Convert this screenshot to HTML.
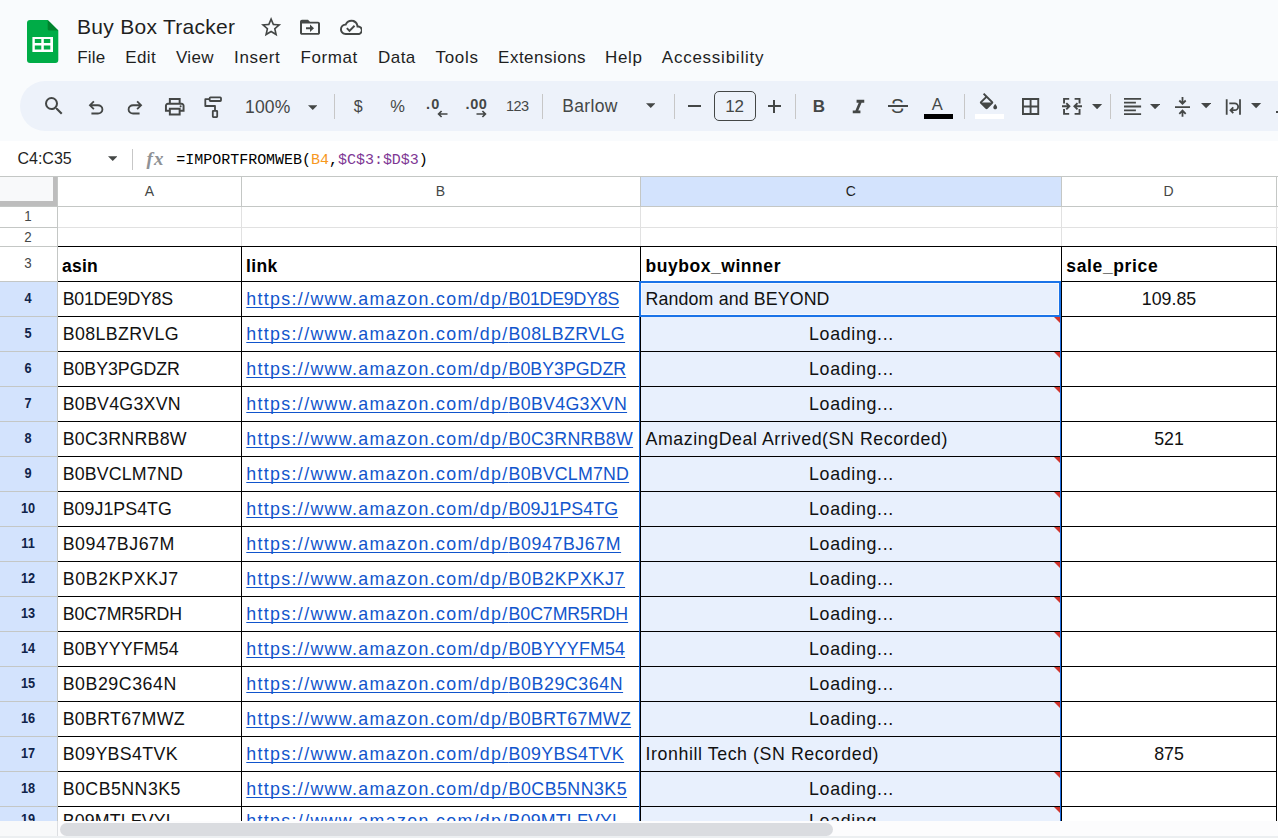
<!DOCTYPE html>
<html lang="en"><head><meta charset="utf-8"><title>Buy Box Tracker</title>
<style>
html,body{margin:0;padding:0}
body{width:1278px;height:838px;overflow:hidden;position:relative;background:#fff;font-family:"Liberation Sans",sans-serif}
.abs{position:absolute;display:block}
.t{position:absolute;white-space:pre;margin:0}
#hdr{position:absolute;left:0;top:0;width:1278px;height:141px;background:#f9fbfd}
#tb{position:absolute;left:20px;top:81px;width:1290px;height:50px;border-radius:25px;background:#edf2fa}
#fb{position:absolute;left:0;top:141px;width:1278px;height:35px;background:#fff}
#grid{position:absolute;left:0;top:0;width:1278px;height:821px;overflow:hidden}
#hs{position:absolute;left:0;top:821px;width:1278px;height:17px;background:#fcfcfd}
</style></head>
<body>
<div id="hdr"></div>
<svg class="abs" style="left:27px;top:20px" width="32" height="43" viewBox="0 0 32 43">
<path d="M3 0h17.700L31.300 10.400V40a3 3 0 0 1-3 3H3a3 3 0 0 1-3-3V3a3 3 0 0 1 3-3z" fill="#00ac47"/>
<path d="M20.700 0L31.300 10.400H22.200a1.500 1.500 0 0 1-1.500-1.500z" fill="#00832d"/>
<path d="M5.400 16.900v15h20.600v-15zm2.400 2.200h6.500V23H7.800zm9 0h6.500V23h-6.500zM7.800 25.600h6.500v3.800H7.800zm9 0h6.500v3.800h-6.500z" fill="#fff"/>
</svg>
<div class="t " style="left:77px;top:6px;line-height:41px;font-size:21px;font-weight:normal;color:#1f1f1f;font-family:'Liberation Sans', sans-serif;font-style:normal;letter-spacing:0.283px;">Buy Box Tracker</div>
<svg class="abs" style="left:259px;top:14.500px" width="24.200" height="24.200" viewBox="0 0 24 24"><path fill="#444746" d="M22 9.240l-7.190-.62L12 2 9.190 8.630 2 9.240l5.460 4.730L5.820 21 12 17.270 18.180 21l-1.630-7.030L22 9.240zM12 15.400l-3.760 2.270 1-4.280-3.320-2.880 4.380-.38L12 6.100l1.710 4.040 4.380.38-3.320 2.880 1 4.280L12 15.400z"/></svg>
<svg class="abs" style="left:298.200px;top:16.400px" width="24" height="22.500" viewBox="0 0 24 24" preserveAspectRatio="none"><path fill="#444746" d="M20 6h-8l-2-2H4c-1.100 0-2 .9-2 2v12c0 1.100.9 2 2 2h16c1.100 0 2-.9 2-2V8c0-1.100-.9-2-2-2zm0 12H4V8h16v10zm-7.990-1l4-4-4-4v3H8v2h4.010v3z"/></svg>
<svg class="abs" style="left:339.700px;top:16.200px" width="22.800" height="22.800" viewBox="0 0 24 24"><path fill="#444746" d="M19.350 10.040A7.490 7.490 0 0 0 12 4C9.110 4 6.600 5.640 5.350 8.040A5.994 5.994 0 0 0 0 14c0 3.310 2.690 6 6 6h13c2.760 0 5-2.240 5-5 0-2.640-2.050-4.780-4.650-4.960zM19 18H6c-2.210 0-4-1.790-4-4s1.790-4 4-4h.71C7.370 7.690 9.480 6 12 6c3.040 0 5.500 2.460 5.500 5.500v.5H19c1.660 0 3 1.340 3 3s-1.340 3-3 3zm-9-3.820l-2.090-2.090L6.500 13.500 10 17l6.010-6.010-1.410-1.410z"/></svg>
<div class="t " style="left:77.3px;top:37px;line-height:41px;font-size:17px;font-weight:normal;color:#1f1f1f;font-family:'Liberation Sans', sans-serif;font-style:normal;letter-spacing:0.148px;">File</div>
<div class="t " style="left:125.2px;top:37px;line-height:41px;font-size:17px;font-weight:normal;color:#1f1f1f;font-family:'Liberation Sans', sans-serif;font-style:normal;letter-spacing:0.376px;">Edit</div>
<div class="t " style="left:175.9px;top:37px;line-height:41px;font-size:17px;font-weight:normal;color:#1f1f1f;font-family:'Liberation Sans', sans-serif;font-style:normal;letter-spacing:0.363px;">View</div>
<div class="t " style="left:234.1px;top:37px;line-height:41px;font-size:17px;font-weight:normal;color:#1f1f1f;font-family:'Liberation Sans', sans-serif;font-style:normal;letter-spacing:0.645px;">Insert</div>
<div class="t " style="left:300.5px;top:37px;line-height:41px;font-size:17px;font-weight:normal;color:#1f1f1f;font-family:'Liberation Sans', sans-serif;font-style:normal;letter-spacing:0.576px;">Format</div>
<div class="t " style="left:378.1px;top:37px;line-height:41px;font-size:17px;font-weight:normal;color:#1f1f1f;font-family:'Liberation Sans', sans-serif;font-style:normal;letter-spacing:0.42px;">Data</div>
<div class="t " style="left:435.5px;top:37px;line-height:41px;font-size:17px;font-weight:normal;color:#1f1f1f;font-family:'Liberation Sans', sans-serif;font-style:normal;letter-spacing:0.702px;">Tools</div>
<div class="t " style="left:498.1px;top:37px;line-height:41px;font-size:17px;font-weight:normal;color:#1f1f1f;font-family:'Liberation Sans', sans-serif;font-style:normal;letter-spacing:0.483px;">Extensions</div>
<div class="t " style="left:605.1px;top:37px;line-height:41px;font-size:17px;font-weight:normal;color:#1f1f1f;font-family:'Liberation Sans', sans-serif;font-style:normal;letter-spacing:0.608px;">Help</div>
<div class="t " style="left:661.8px;top:37px;line-height:41px;font-size:17px;font-weight:normal;color:#1f1f1f;font-family:'Liberation Sans', sans-serif;font-style:normal;letter-spacing:0.754px;">Accessibility</div>
<div id="tb"></div>
<svg class="abs" style="left:41.65px;top:94.10px" width="24" height="24" viewBox="0 0 24 24"><path fill="#444746" d="M15.500 14h-.79l-.28-.27A6.471 6.471 0 0 0 16 9.500 6.500 6.500 0 1 0 9.500 16c1.610 0 3.090-.59 4.230-1.570l.27.280v.79l5 4.990L20.490 19l-4.990-5zm-6 0C7.010 14 5 11.990 5 9.500S7.010 5 9.500 5 14 7.010 14 9.500 11.990 14 9.500 14z"/></svg>
<svg class="abs" style="left:85.40px;top:96.96px" width="22" height="22" viewBox="0 -960 960 960"><path fill="#444746" d="M280-200v-80h284q63 0 109.500-40T720-420q0-60-46.500-100T564-560H312l104 104-56 56-200-200 200-200 56 56-104 104h252q97 0 166.500 63T800-420q0 94-69.500 157T564-200H280Z"/></svg>
<svg class="abs" style="left:124.30px;top:96.96px" width="22" height="22" viewBox="0 -960 960 960"><path fill="#444746" d="M396-200q-97 0-166.500-63T160-420q0-94 69.500-157T396-640h252L544-744l56-56 200 200-200 200-56-56 104-104H396q-63 0-109.500 40T240-420q0 60 46.500 100T396-280h284v80H396Z"/></svg>
<svg class="abs" style="left:163.15px;top:94.70px" width="23.5" height="23.5" viewBox="0 -960 960 960"><path fill="#444746" d="M640-640v-120H320v120h-80v-200h480v200h-80Zm-480 80h640-640Zm560 100q17 0 28.500-11.500T760-500q0-17-11.500-28.500T720-540q-17 0-28.500 11.500T680-500q0 17 11.500 28.500T720-460Zm-80 260v-160H320v160h320Zm80 80H240v-160H80v-240q0-51 35-85.500t85-34.500h560q51 0 85.500 34.500T880-520v240H720v160Zm80-240v-160q0-17-11.500-28.500T760-560H200q-17 0-28.500 11.500T160-520v160h80v-80h480v80h80Z"/></svg>
<svg class="abs" style="left:200px;top:94px" width="26" height="26" viewBox="200 94 26 26"><g fill="none" stroke="#444746" stroke-width="1.800" stroke-linejoin="round">
<rect x="209.650" y="97.400" width="11.350" height="3.600" rx=".8"/><path d="M209.650 99.200H205.300v6.800h9.700v4.500"/><rect x="212.800" y="110.800" width="4.400" height="6.300" rx=".5"/></g></svg>
<div class="t " style="left:245px;top:87px;line-height:40px;font-size:17.5px;font-weight:normal;color:#444746;font-family:'Liberation Sans', sans-serif;font-style:normal;letter-spacing:0.184px;">100%</div>
<svg class="abs" style="left:307.85px;top:104.50px" width="9.5" height="5" viewBox="0 0 10 5"><path d="M0 0h10L5 5z" fill="#444746"/></svg>
<div class="abs" style="left:334px;top:94px;width:1px;height:24.5px;background:#c7c7c7"></div>
<div class="t " style="left:158.10000000000002px;top:86px;line-height:41px;font-size:16px;font-weight:normal;color:#444746;font-family:'Liberation Sans', sans-serif;font-style:normal;width:400px;text-align:center;">$</div>
<div class="t " style="left:197.5px;top:86px;line-height:40px;font-size:16.5px;font-weight:normal;color:#444746;font-family:'Liberation Sans', sans-serif;font-style:normal;width:400px;text-align:center;">%</div>
<div class="t " style="left:426px;top:84px;line-height:40px;font-size:14.5px;font-weight:bold;color:#444746;font-family:'Liberation Sans', sans-serif;font-style:normal;letter-spacing:1.203px;">.0</div>
<svg class="abs" style="left:436.500px;top:109.500px" width="11" height="8" viewBox="0 0 11 8"><path d="M10.500 4H2M4.600 1L1.600 4l3 3" fill="none" stroke="#444746" stroke-width="1.700"/></svg>
<div class="t " style="left:465.5px;top:84px;line-height:40px;font-size:14.5px;font-weight:bold;color:#444746;font-family:'Liberation Sans', sans-serif;font-style:normal;letter-spacing:0.609px;">.00</div>
<svg class="abs" style="left:476px;top:109.500px" width="11" height="8" viewBox="0 0 11 8"><path d="M.5 4H9M6.400 1l3 3-3 3" fill="none" stroke="#444746" stroke-width="1.700"/></svg>
<div class="t " style="left:506px;top:86px;line-height:40px;font-size:14.5px;font-weight:normal;color:#444746;font-family:'Liberation Sans', sans-serif;font-style:normal;letter-spacing:-0.568px;">123</div>
<div class="abs" style="left:542px;top:94px;width:1px;height:24.5px;background:#c7c7c7"></div>
<div class="t " style="left:562.3px;top:86px;line-height:40px;font-size:17.5px;font-weight:normal;color:#444746;font-family:'Liberation Sans', sans-serif;font-style:normal;letter-spacing:0.333px;">Barlow</div>
<svg class="abs" style="left:645.75px;top:102.70px" width="9.5" height="5" viewBox="0 0 10 5"><path d="M0 0h10L5 5z" fill="#444746"/></svg>
<div class="abs" style="left:674px;top:94px;width:1px;height:24.5px;background:#c7c7c7"></div>
<div class="abs" style="left:688px;top:105.200px;width:13px;height:1.800px;background:#444746"></div>
<div class="abs" style="left:713.500px;top:91px;width:42.500px;height:30px;box-sizing:border-box;border:1px solid #444746;border-radius:5px"></div>
<div class="t " style="left:534.6px;top:86px;line-height:41px;font-size:17px;font-weight:normal;color:#444746;font-family:'Liberation Sans', sans-serif;font-style:normal;width:400px;text-align:center;">12</div>
<div class="abs" style="left:767.500px;top:105.200px;width:13px;height:1.800px;background:#444746"></div>
<div class="abs" style="left:773.100px;top:99.700px;width:1.800px;height:13px;background:#444746"></div>
<div class="abs" style="left:795px;top:94px;width:1px;height:24.5px;background:#c7c7c7"></div>
<div class="t " style="left:618.9px;top:86px;line-height:41px;font-size:17px;font-weight:bold;color:#444746;font-family:'Liberation Sans', sans-serif;font-style:normal;width:400px;text-align:center;">B</div>
<svg class="abs" style="left:846.75px;top:95.71px" width="23" height="23" viewBox="0 0 24 24"><path fill="#444746" d="M10 4v3h2.210l-3.420 8H6v3h8v-3h-2.210l3.420-8H18V4z"/></svg>
<div class="t " style="left:697.5px;top:86px;line-height:40px;font-size:19.5px;font-weight:normal;color:#444746;font-family:'Liberation Sans', sans-serif;font-style:normal;width:400px;text-align:center;">S</div>
<div class="abs" style="left:887.500px;top:105.300px;width:20px;height:1.800px;background:#444746;box-shadow:0 -1.500px 0 #edf2fa,0 1.500px 0 #edf2fa"></div>
<div class="t " style="left:737.3px;top:84px;line-height:40px;font-size:16.5px;font-weight:normal;color:#444746;font-family:'Liberation Sans', sans-serif;font-style:normal;width:400px;text-align:center;">A</div>
<div class="abs" style="left:923.600px;top:114px;width:29.300px;height:5px;background:#000"></div>
<div class="abs" style="left:964px;top:94px;width:1px;height:24.5px;background:#c7c7c7"></div>
<svg class="abs" style="left:977px;top:93px" width="23" height="23" viewBox="0 0 24 24"><path fill="#444746" d="M16.560 8.940L7.620 0 6.210 1.410l2.380 2.380-5.150 5.150c-.59.590-.59 1.540 0 2.120l5.500 5.500c.29.290.68.440 1.060.440s.77-.15 1.060-.44l5.500-5.500c.59-.58.590-1.530 0-2.120zM5.210 10L10 5.210 14.790 10H5.210zM19 11.500s-2 2.170-2 3.500c0 1.100.9 2 2 2s2-.9 2-2c0-1.330-2-3.500-2-3.500z"/></svg>
<div class="abs" style="left:974.900px;top:114px;width:29.300px;height:5px;background:#fff"></div>
<svg class="abs" style="left:1020px;top:96px" width="22" height="22" viewBox="1020 96 22 22"><path fill="none" stroke="#444746" stroke-width="1.900" d="M1022.950 99.050h15.300v14.900h-15.300zM1030.600 99v15M1023 106.500h15.300"/></svg>
<svg class="abs" style="left:1058px;top:94px" width="28" height="24" viewBox="1058 94 28 24"><g fill="none" stroke="#444746" stroke-width="1.900"><path d="M1069.200 98.850h-5.150v4.700M1064.050 109.100v4.750h5.150M1074.600 98.850h4.950v4.700M1079.550 109.100v4.750h-4.950"/><path d="M1062 106.300h7M1066.300 103.200l3.100 3.100-3.100 3.100M1082 106.300h-7M1077.500 103.200l-3.100 3.100 3.100 3.100"/></g></svg>
<svg class="abs" style="left:1092.40px;top:103.55px" width="10.2" height="5.3" viewBox="0 0 10 5"><path d="M0 0h10L5 5z" fill="#444746"/></svg>
<div class="abs" style="left:1110px;top:94px;width:1px;height:24.5px;background:#c7c7c7"></div>
<svg class="abs" style="left:1120px;top:94px" width="24" height="24" viewBox="1120 94 24 24"><path fill="none" stroke="#444746" stroke-width="1.850" d="M1124 98.800h17.100M1124 102.650h11.900M1124 106.500h17.100M1124 110.350h11.900M1124 114.150h17.100"/></svg>
<svg class="abs" style="left:1149.60px;top:103.55px" width="10.2" height="5.3" viewBox="0 0 10 5"><path d="M0 0h10L5 5z" fill="#444746"/></svg>
<svg class="abs" style="left:1170px;top:94px" width="24" height="26" viewBox="1170 94 24 26"><path fill="none" stroke="#444746" stroke-width="1.800" d="M1175 107.200h15M1182.500 97v6M1179.300 100.500l3.200 3.200 3.200-3.200M1182.500 116.800v-5.500M1179.300 113.800l3.200-3.200 3.200 3.200"/></svg>
<svg class="abs" style="left:1200.50px;top:103.35px" width="10.2" height="5.3" viewBox="0 0 10 5"><path d="M0 0h10L5 5z" fill="#444746"/></svg>
<svg class="abs" style="left:1222px;top:94px" width="24" height="24" viewBox="1222 94 24 24"><path fill="none" stroke="#444746" stroke-width="1.800" d="M1226.700 99.300v15.500M1240 99.300v15.500M1229.300 103.300h5.400a3.450 3.450 0 0 1 0 6.900h-3.600M1233.300 107.300l-2.800 2.900 2.800 2.900"/></svg>
<svg class="abs" style="left:1251.40px;top:103.35px" width="10.2" height="5.3" viewBox="0 0 10 5"><path d="M0 0h10L5 5z" fill="#444746"/></svg>
<div class="abs" style="left:1276.300px;top:111.300px;width:3px;height:2px;background:#444746"></div>
<div id="fb"></div>
<div class="t " style="left:17.6px;top:138px;line-height:41px;font-size:16px;font-weight:normal;color:#1f1f1f;font-family:'Liberation Sans', sans-serif;font-style:normal;letter-spacing:-0.042px;">C4:C35</div>
<svg class="abs" style="left:107.75px;top:155.70px" width="9.5" height="5" viewBox="0 0 10 5"><path d="M0 0h10L5 5z" fill="#444746"/></svg>
<div class="abs" style="left:132px;top:149px;width:1px;height:20.500px;background:#c7c7c7"></div>
<div class="t " style="left:146.5px;top:138px;line-height:41px;font-size:19px;font-weight:bold;color:#8f9296;font-family:'Liberation Serif', serif;font-style:italic;letter-spacing:1.086px;">fx</div>
<div class="t " style="left:176.3px;top:140px;line-height:41px;font-size:15px;font-weight:normal;color:#000;font-family:'Liberation Mono', monospace;font-style:normal;letter-spacing:-0.02px;"><span>=IMPORTFROMWEB(</span><span style="color:#f7981d">B4</span><span>,</span><span style="color:#7e3794">$C$3:$D$3</span><span>)</span></div>
<div id="grid">
<div class="abs" style="left:0px;top:177px;width:1278px;height:29px;background:#fff;"></div>
<div class="abs" style="left:641px;top:177px;width:420px;height:29px;background:#d3e3fd;"></div>
<div class="abs" style="left:0px;top:282px;width:57px;height:540px;background:#d3e3fd;"></div>
<div class="abs" style="left:641px;top:282px;width:420px;height:540px;background:#e8f0fd;"></div>
<div class="abs" style="left:0px;top:177px;width:53px;height:24px;background:#f8f9fa;"></div>
<div class="abs" style="left:53px;top:177px;width:4.5px;height:29px;background:#bdbdbd;"></div>
<div class="abs" style="left:0px;top:201px;width:57px;height:5px;background:#bdbdbd;"></div>
<div class="abs" style="left:0px;top:176px;width:1278px;height:1px;background:#c4c7c5;"></div>
<div class="abs" style="left:0px;top:206px;width:58px;height:1px;background:#c4c7c5;"></div>
<div class="abs" style="left:0px;top:227px;width:58px;height:1px;background:#c4c7c5;"></div>
<div class="abs" style="left:0px;top:246px;width:58px;height:1px;background:#c4c7c5;"></div>
<div class="abs" style="left:0px;top:281px;width:58px;height:1px;background:#c4c7c5;"></div>
<div class="abs" style="left:0px;top:316px;width:58px;height:1px;background:#c4c7c5;"></div>
<div class="abs" style="left:0px;top:351px;width:58px;height:1px;background:#c4c7c5;"></div>
<div class="abs" style="left:0px;top:386px;width:58px;height:1px;background:#c4c7c5;"></div>
<div class="abs" style="left:0px;top:421px;width:58px;height:1px;background:#c4c7c5;"></div>
<div class="abs" style="left:0px;top:456px;width:58px;height:1px;background:#c4c7c5;"></div>
<div class="abs" style="left:0px;top:491px;width:58px;height:1px;background:#c4c7c5;"></div>
<div class="abs" style="left:0px;top:526px;width:58px;height:1px;background:#c4c7c5;"></div>
<div class="abs" style="left:0px;top:561px;width:58px;height:1px;background:#c4c7c5;"></div>
<div class="abs" style="left:0px;top:596px;width:58px;height:1px;background:#c4c7c5;"></div>
<div class="abs" style="left:0px;top:631px;width:58px;height:1px;background:#c4c7c5;"></div>
<div class="abs" style="left:0px;top:666px;width:58px;height:1px;background:#c4c7c5;"></div>
<div class="abs" style="left:0px;top:701px;width:58px;height:1px;background:#c4c7c5;"></div>
<div class="abs" style="left:0px;top:736px;width:58px;height:1px;background:#c4c7c5;"></div>
<div class="abs" style="left:0px;top:771px;width:58px;height:1px;background:#c4c7c5;"></div>
<div class="abs" style="left:0px;top:806px;width:58px;height:1px;background:#c4c7c5;"></div>
<div class="abs" style="left:0px;top:841px;width:58px;height:1px;background:#c4c7c5;"></div>
<div class="abs" style="left:57px;top:177px;width:1px;height:30px;background:#c4c7c5;"></div>
<div class="abs" style="left:241px;top:177px;width:1px;height:30px;background:#c4c7c5;"></div>
<div class="abs" style="left:640px;top:177px;width:1px;height:30px;background:#c4c7c5;"></div>
<div class="abs" style="left:1061px;top:177px;width:1px;height:30px;background:#c4c7c5;"></div>
<div class="abs" style="left:1276px;top:177px;width:1px;height:30px;background:#c4c7c5;"></div>
<div class="abs" style="left:0px;top:206px;width:1278px;height:1px;background:#c4c7c5;"></div>
<div class="abs" style="left:57px;top:177px;width:1px;height:660px;background:#c4c7c5;"></div>
<div class="abs" style="left:58px;top:227px;width:1220px;height:1px;background:#e1e1e1;"></div>
<div class="abs" style="left:241px;top:207px;width:1px;height:40px;background:#e1e1e1;"></div>
<div class="abs" style="left:640px;top:207px;width:1px;height:40px;background:#e1e1e1;"></div>
<div class="abs" style="left:1061px;top:207px;width:1px;height:40px;background:#e1e1e1;"></div>
<div class="abs" style="left:1276px;top:207px;width:1px;height:40px;background:#e1e1e1;"></div>
<div class="abs" style="left:58px;top:246px;width:1219px;height:1px;background:#000;"></div>
<div class="abs" style="left:58px;top:281px;width:1219px;height:1px;background:#000;"></div>
<div class="abs" style="left:58px;top:316px;width:1219px;height:1px;background:#000;"></div>
<div class="abs" style="left:58px;top:351px;width:1219px;height:1px;background:#000;"></div>
<div class="abs" style="left:58px;top:386px;width:1219px;height:1px;background:#000;"></div>
<div class="abs" style="left:58px;top:421px;width:1219px;height:1px;background:#000;"></div>
<div class="abs" style="left:58px;top:456px;width:1219px;height:1px;background:#000;"></div>
<div class="abs" style="left:58px;top:491px;width:1219px;height:1px;background:#000;"></div>
<div class="abs" style="left:58px;top:526px;width:1219px;height:1px;background:#000;"></div>
<div class="abs" style="left:58px;top:561px;width:1219px;height:1px;background:#000;"></div>
<div class="abs" style="left:58px;top:596px;width:1219px;height:1px;background:#000;"></div>
<div class="abs" style="left:58px;top:631px;width:1219px;height:1px;background:#000;"></div>
<div class="abs" style="left:58px;top:666px;width:1219px;height:1px;background:#000;"></div>
<div class="abs" style="left:58px;top:701px;width:1219px;height:1px;background:#000;"></div>
<div class="abs" style="left:58px;top:736px;width:1219px;height:1px;background:#000;"></div>
<div class="abs" style="left:58px;top:771px;width:1219px;height:1px;background:#000;"></div>
<div class="abs" style="left:58px;top:806px;width:1219px;height:1px;background:#000;"></div>
<div class="abs" style="left:58px;top:841px;width:1219px;height:1px;background:#000;"></div>
<div class="abs" style="left:241px;top:246px;width:1px;height:580px;background:#000;"></div>
<div class="abs" style="left:640px;top:246px;width:1px;height:580px;background:#000;"></div>
<div class="abs" style="left:1061px;top:246px;width:1px;height:580px;background:#000;"></div>
<div class="abs" style="left:1276px;top:246px;width:1px;height:580px;background:#000;"></div>
<div class="abs" style="left:1060px;top:317px;width:1px;height:510px;background:#1a6ae0;"></div>
<div class="abs" style="left:639px;top:317px;width:1px;height:510px;background:#1a6ae0;"></div>
<div class="abs" style="left:639px;top:281px;width:422px;height:36px;box-sizing:border-box;border:2px solid #1a73e8;box-shadow:inset 0 0 0 1px #f6f9fe"></div>
<div class="t " style="left:-50.5px;top:171px;line-height:40px;font-size:14px;font-weight:normal;color:#444746;font-family:'Liberation Sans', sans-serif;font-style:normal;width:400px;text-align:center;">A</div>
<div class="t " style="left:240.5px;top:171px;line-height:40px;font-size:14px;font-weight:normal;color:#444746;font-family:'Liberation Sans', sans-serif;font-style:normal;width:400px;text-align:center;">B</div>
<div class="t " style="left:650.7px;top:171px;line-height:40px;font-size:14px;font-weight:normal;color:#1f1f1f;font-family:'Liberation Sans', sans-serif;font-style:normal;width:400px;text-align:center;">C</div>
<div class="t " style="left:968.5px;top:171px;line-height:40px;font-size:14px;font-weight:normal;color:#444746;font-family:'Liberation Sans', sans-serif;font-style:normal;width:400px;text-align:center;">D</div>
<div class="t " style="left:-171.7px;top:196px;line-height:40px;font-size:14.2px;font-weight:normal;color:#444746;font-family:'Liberation Sans', sans-serif;font-style:normal;width:400px;text-align:center;transform:scaleX(.94);">1</div>
<div class="t " style="left:-171.7px;top:217px;line-height:40px;font-size:14.2px;font-weight:normal;color:#444746;font-family:'Liberation Sans', sans-serif;font-style:normal;width:400px;text-align:center;transform:scaleX(.94);">2</div>
<div class="t " style="left:-171.7px;top:243px;line-height:40px;font-size:14.2px;font-weight:normal;color:#444746;font-family:'Liberation Sans', sans-serif;font-style:normal;width:400px;text-align:center;transform:scaleX(.94);">3</div>
<div class="t " style="left:-171.7px;top:278px;line-height:40px;font-size:14.5px;font-weight:bold;color:#10234a;font-family:'Liberation Sans', sans-serif;font-style:normal;width:400px;text-align:center;transform:scaleX(.88);">4</div>
<div class="t " style="left:-171.7px;top:313px;line-height:40px;font-size:14.5px;font-weight:bold;color:#10234a;font-family:'Liberation Sans', sans-serif;font-style:normal;width:400px;text-align:center;transform:scaleX(.88);">5</div>
<div class="t " style="left:-171.7px;top:348px;line-height:40px;font-size:14.5px;font-weight:bold;color:#10234a;font-family:'Liberation Sans', sans-serif;font-style:normal;width:400px;text-align:center;transform:scaleX(.88);">6</div>
<div class="t " style="left:-171.7px;top:383px;line-height:40px;font-size:14.5px;font-weight:bold;color:#10234a;font-family:'Liberation Sans', sans-serif;font-style:normal;width:400px;text-align:center;transform:scaleX(.88);">7</div>
<div class="t " style="left:-171.7px;top:418px;line-height:40px;font-size:14.5px;font-weight:bold;color:#10234a;font-family:'Liberation Sans', sans-serif;font-style:normal;width:400px;text-align:center;transform:scaleX(.88);">8</div>
<div class="t " style="left:-171.7px;top:453px;line-height:40px;font-size:14.5px;font-weight:bold;color:#10234a;font-family:'Liberation Sans', sans-serif;font-style:normal;width:400px;text-align:center;transform:scaleX(.88);">9</div>
<div class="t " style="left:-171.7px;top:488px;line-height:40px;font-size:14.5px;font-weight:bold;color:#10234a;font-family:'Liberation Sans', sans-serif;font-style:normal;width:400px;text-align:center;transform:scaleX(.88);">10</div>
<div class="t " style="left:-171.7px;top:523px;line-height:40px;font-size:14.5px;font-weight:bold;color:#10234a;font-family:'Liberation Sans', sans-serif;font-style:normal;width:400px;text-align:center;transform:scaleX(.88);">11</div>
<div class="t " style="left:-171.7px;top:558px;line-height:40px;font-size:14.5px;font-weight:bold;color:#10234a;font-family:'Liberation Sans', sans-serif;font-style:normal;width:400px;text-align:center;transform:scaleX(.88);">12</div>
<div class="t " style="left:-171.7px;top:593px;line-height:40px;font-size:14.5px;font-weight:bold;color:#10234a;font-family:'Liberation Sans', sans-serif;font-style:normal;width:400px;text-align:center;transform:scaleX(.88);">13</div>
<div class="t " style="left:-171.7px;top:628px;line-height:40px;font-size:14.5px;font-weight:bold;color:#10234a;font-family:'Liberation Sans', sans-serif;font-style:normal;width:400px;text-align:center;transform:scaleX(.88);">14</div>
<div class="t " style="left:-171.7px;top:663px;line-height:40px;font-size:14.5px;font-weight:bold;color:#10234a;font-family:'Liberation Sans', sans-serif;font-style:normal;width:400px;text-align:center;transform:scaleX(.88);">15</div>
<div class="t " style="left:-171.7px;top:698px;line-height:40px;font-size:14.5px;font-weight:bold;color:#10234a;font-family:'Liberation Sans', sans-serif;font-style:normal;width:400px;text-align:center;transform:scaleX(.88);">16</div>
<div class="t " style="left:-171.7px;top:733px;line-height:40px;font-size:14.5px;font-weight:bold;color:#10234a;font-family:'Liberation Sans', sans-serif;font-style:normal;width:400px;text-align:center;transform:scaleX(.88);">17</div>
<div class="t " style="left:-171.7px;top:768px;line-height:40px;font-size:14.5px;font-weight:bold;color:#10234a;font-family:'Liberation Sans', sans-serif;font-style:normal;width:400px;text-align:center;transform:scaleX(.88);">18</div>
<div class="t " style="left:-171.7px;top:799px;line-height:40px;font-size:14.5px;font-weight:bold;color:#10234a;font-family:'Liberation Sans', sans-serif;font-style:normal;width:400px;text-align:center;transform:scaleX(.88);">19</div>
<div class="t " style="left:62px;top:246px;line-height:40px;font-size:17.5px;font-weight:bold;color:#000;font-family:'Liberation Sans', sans-serif;font-style:normal;letter-spacing:0.242px;">asin</div>
<div class="t " style="left:246px;top:246px;line-height:40px;font-size:17.5px;font-weight:bold;color:#000;font-family:'Liberation Sans', sans-serif;font-style:normal;letter-spacing:0.336px;">link</div>
<div class="t " style="left:645.5px;top:246px;line-height:40px;font-size:17.5px;font-weight:bold;color:#000;font-family:'Liberation Sans', sans-serif;font-style:normal;letter-spacing:0.549px;">buybox_winner</div>
<div class="t " style="left:1066.3px;top:246px;line-height:40px;font-size:17.5px;font-weight:bold;color:#000;font-family:'Liberation Sans', sans-serif;font-style:normal;letter-spacing:0.637px;">sale_price</div>
<div class="t " style="left:62.7px;top:279px;line-height:40px;font-size:17.8px;font-weight:normal;color:#111;font-family:'Liberation Sans', sans-serif;font-style:normal;letter-spacing:-0.249px;">B01DE9DY8S</div>
<div class="t " style="left:246.3px;top:279px;line-height:40px;font-size:17.8px;font-weight:normal;color:#1155cc;font-family:'Liberation Sans', sans-serif;font-style:normal;text-decoration:underline;text-decoration-thickness:1.100px;text-underline-offset:1.800px;text-decoration-skip-ink:none;"><span style="letter-spacing:1.346px">https://www.amazon.com/dp/</span><span style="letter-spacing:-0.219px">B01DE9DY8S</span></div>
<div class="t " style="left:645.6px;top:279px;line-height:40px;font-size:17.8px;font-weight:normal;color:#111;font-family:'Liberation Sans', sans-serif;font-style:normal;letter-spacing:0.126px;">Random and BEYOND</div>
<div class="t " style="left:969px;top:279px;line-height:40px;font-size:17.8px;font-weight:normal;color:#111;font-family:'Liberation Sans', sans-serif;font-style:normal;width:400px;text-align:center;">109.85</div>
<div class="t " style="left:62.7px;top:314px;line-height:40px;font-size:17.8px;font-weight:normal;color:#111;font-family:'Liberation Sans', sans-serif;font-style:normal;letter-spacing:0.384px;">B08LBZRVLG</div>
<div class="t " style="left:246.3px;top:314px;line-height:40px;font-size:17.8px;font-weight:normal;color:#1155cc;font-family:'Liberation Sans', sans-serif;font-style:normal;text-decoration:underline;text-decoration-thickness:1.100px;text-underline-offset:1.800px;text-decoration-skip-ink:none;"><span style="letter-spacing:1.346px">https://www.amazon.com/dp/</span><span style="letter-spacing:0.414px">B08LBZRVLG</span></div>
<div class="t " style="left:809px;top:314px;line-height:40px;font-size:17.8px;font-weight:normal;color:#111;font-family:'Liberation Sans', sans-serif;font-style:normal;letter-spacing:0.689px;">Loading...</div>
<div class="abs" style="left:1053.5px;top:317px;width:0;height:0;border-left:6.500px solid transparent;border-top:6.500px solid #d0342c"></div>
<div class="t " style="left:62.7px;top:349px;line-height:40px;font-size:17.8px;font-weight:normal;color:#111;font-family:'Liberation Sans', sans-serif;font-style:normal;letter-spacing:-0.039px;">B0BY3PGDZR</div>
<div class="t " style="left:246.3px;top:349px;line-height:40px;font-size:17.8px;font-weight:normal;color:#1155cc;font-family:'Liberation Sans', sans-serif;font-style:normal;text-decoration:underline;text-decoration-thickness:1.100px;text-underline-offset:1.800px;text-decoration-skip-ink:none;"><span style="letter-spacing:1.346px">https://www.amazon.com/dp/</span><span style="letter-spacing:-0.009px">B0BY3PGDZR</span></div>
<div class="t " style="left:809px;top:349px;line-height:40px;font-size:17.8px;font-weight:normal;color:#111;font-family:'Liberation Sans', sans-serif;font-style:normal;letter-spacing:0.689px;">Loading...</div>
<div class="abs" style="left:1053.5px;top:352px;width:0;height:0;border-left:6.500px solid transparent;border-top:6.500px solid #d0342c"></div>
<div class="t " style="left:62.7px;top:384px;line-height:40px;font-size:17.8px;font-weight:normal;color:#111;font-family:'Liberation Sans', sans-serif;font-style:normal;letter-spacing:0.256px;">B0BV4G3XVN</div>
<div class="t " style="left:246.3px;top:384px;line-height:40px;font-size:17.8px;font-weight:normal;color:#1155cc;font-family:'Liberation Sans', sans-serif;font-style:normal;text-decoration:underline;text-decoration-thickness:1.100px;text-underline-offset:1.800px;text-decoration-skip-ink:none;"><span style="letter-spacing:1.346px">https://www.amazon.com/dp/</span><span style="letter-spacing:0.286px">B0BV4G3XVN</span></div>
<div class="t " style="left:809px;top:384px;line-height:40px;font-size:17.8px;font-weight:normal;color:#111;font-family:'Liberation Sans', sans-serif;font-style:normal;letter-spacing:0.689px;">Loading...</div>
<div class="abs" style="left:1053.5px;top:387px;width:0;height:0;border-left:6.500px solid transparent;border-top:6.500px solid #d0342c"></div>
<div class="t " style="left:62.7px;top:419px;line-height:40px;font-size:17.8px;font-weight:normal;color:#111;font-family:'Liberation Sans', sans-serif;font-style:normal;letter-spacing:0.265px;">B0C3RNRB8W</div>
<div class="t " style="left:246.3px;top:419px;line-height:40px;font-size:17.8px;font-weight:normal;color:#1155cc;font-family:'Liberation Sans', sans-serif;font-style:normal;text-decoration:underline;text-decoration-thickness:1.100px;text-underline-offset:1.800px;text-decoration-skip-ink:none;"><span style="letter-spacing:1.346px">https://www.amazon.com/dp/</span><span style="letter-spacing:0.295px">B0C3RNRB8W</span></div>
<div class="t " style="left:645.6px;top:419px;line-height:40px;font-size:17.8px;font-weight:normal;color:#111;font-family:'Liberation Sans', sans-serif;font-style:normal;letter-spacing:0.552px;">AmazingDeal Arrived(SN Recorded)</div>
<div class="t " style="left:969px;top:419px;line-height:40px;font-size:17.8px;font-weight:normal;color:#111;font-family:'Liberation Sans', sans-serif;font-style:normal;width:400px;text-align:center;">521</div>
<div class="t " style="left:62.7px;top:454px;line-height:40px;font-size:17.8px;font-weight:normal;color:#111;font-family:'Liberation Sans', sans-serif;font-style:normal;letter-spacing:0.161px;">B0BVCLM7ND</div>
<div class="t " style="left:246.3px;top:454px;line-height:40px;font-size:17.8px;font-weight:normal;color:#1155cc;font-family:'Liberation Sans', sans-serif;font-style:normal;text-decoration:underline;text-decoration-thickness:1.100px;text-underline-offset:1.800px;text-decoration-skip-ink:none;"><span style="letter-spacing:1.346px">https://www.amazon.com/dp/</span><span style="letter-spacing:0.191px">B0BVCLM7ND</span></div>
<div class="t " style="left:809px;top:454px;line-height:40px;font-size:17.8px;font-weight:normal;color:#111;font-family:'Liberation Sans', sans-serif;font-style:normal;letter-spacing:0.689px;">Loading...</div>
<div class="abs" style="left:1053.5px;top:457px;width:0;height:0;border-left:6.500px solid transparent;border-top:6.500px solid #d0342c"></div>
<div class="t " style="left:62.7px;top:489px;line-height:40px;font-size:17.8px;font-weight:normal;color:#111;font-family:'Liberation Sans', sans-serif;font-style:normal;letter-spacing:0.047px;">B09J1PS4TG</div>
<div class="t " style="left:246.3px;top:489px;line-height:40px;font-size:17.8px;font-weight:normal;color:#1155cc;font-family:'Liberation Sans', sans-serif;font-style:normal;text-decoration:underline;text-decoration-thickness:1.100px;text-underline-offset:1.800px;text-decoration-skip-ink:none;"><span style="letter-spacing:1.346px">https://www.amazon.com/dp/</span><span style="letter-spacing:0.077px">B09J1PS4TG</span></div>
<div class="t " style="left:809px;top:489px;line-height:40px;font-size:17.8px;font-weight:normal;color:#111;font-family:'Liberation Sans', sans-serif;font-style:normal;letter-spacing:0.689px;">Loading...</div>
<div class="abs" style="left:1053.5px;top:492px;width:0;height:0;border-left:6.500px solid transparent;border-top:6.500px solid #d0342c"></div>
<div class="t " style="left:62.7px;top:524px;line-height:40px;font-size:17.8px;font-weight:normal;color:#111;font-family:'Liberation Sans', sans-serif;font-style:normal;letter-spacing:0.543px;">B0947BJ67M</div>
<div class="t " style="left:246.3px;top:524px;line-height:40px;font-size:17.8px;font-weight:normal;color:#1155cc;font-family:'Liberation Sans', sans-serif;font-style:normal;text-decoration:underline;text-decoration-thickness:1.100px;text-underline-offset:1.800px;text-decoration-skip-ink:none;"><span style="letter-spacing:1.346px">https://www.amazon.com/dp/</span><span style="letter-spacing:0.573px">B0947BJ67M</span></div>
<div class="t " style="left:809px;top:524px;line-height:40px;font-size:17.8px;font-weight:normal;color:#111;font-family:'Liberation Sans', sans-serif;font-style:normal;letter-spacing:0.689px;">Loading...</div>
<div class="abs" style="left:1053.5px;top:527px;width:0;height:0;border-left:6.500px solid transparent;border-top:6.500px solid #d0342c"></div>
<div class="t " style="left:62.7px;top:559px;line-height:40px;font-size:17.8px;font-weight:normal;color:#111;font-family:'Liberation Sans', sans-serif;font-style:normal;letter-spacing:0.648px;">B0B2KPXKJ7</div>
<div class="t " style="left:246.3px;top:559px;line-height:40px;font-size:17.8px;font-weight:normal;color:#1155cc;font-family:'Liberation Sans', sans-serif;font-style:normal;text-decoration:underline;text-decoration-thickness:1.100px;text-underline-offset:1.800px;text-decoration-skip-ink:none;"><span style="letter-spacing:1.346px">https://www.amazon.com/dp/</span><span style="letter-spacing:0.678px">B0B2KPXKJ7</span></div>
<div class="t " style="left:809px;top:559px;line-height:40px;font-size:17.8px;font-weight:normal;color:#111;font-family:'Liberation Sans', sans-serif;font-style:normal;letter-spacing:0.689px;">Loading...</div>
<div class="abs" style="left:1053.5px;top:562px;width:0;height:0;border-left:6.500px solid transparent;border-top:6.500px solid #d0342c"></div>
<div class="t " style="left:62.7px;top:594px;line-height:40px;font-size:17.8px;font-weight:normal;color:#111;font-family:'Liberation Sans', sans-serif;font-style:normal;letter-spacing:-0.135px;">B0C7MR5RDH</div>
<div class="t " style="left:246.3px;top:594px;line-height:40px;font-size:17.8px;font-weight:normal;color:#1155cc;font-family:'Liberation Sans', sans-serif;font-style:normal;text-decoration:underline;text-decoration-thickness:1.100px;text-underline-offset:1.800px;text-decoration-skip-ink:none;"><span style="letter-spacing:1.346px">https://www.amazon.com/dp/</span><span style="letter-spacing:-0.105px">B0C7MR5RDH</span></div>
<div class="t " style="left:809px;top:594px;line-height:40px;font-size:17.8px;font-weight:normal;color:#111;font-family:'Liberation Sans', sans-serif;font-style:normal;letter-spacing:0.689px;">Loading...</div>
<div class="abs" style="left:1053.5px;top:597px;width:0;height:0;border-left:6.500px solid transparent;border-top:6.500px solid #d0342c"></div>
<div class="t " style="left:62.7px;top:629px;line-height:40px;font-size:17.8px;font-weight:normal;color:#111;font-family:'Liberation Sans', sans-serif;font-style:normal;letter-spacing:0.156px;">B0BYYYFM54</div>
<div class="t " style="left:246.3px;top:629px;line-height:40px;font-size:17.8px;font-weight:normal;color:#1155cc;font-family:'Liberation Sans', sans-serif;font-style:normal;text-decoration:underline;text-decoration-thickness:1.100px;text-underline-offset:1.800px;text-decoration-skip-ink:none;"><span style="letter-spacing:1.346px">https://www.amazon.com/dp/</span><span style="letter-spacing:0.186px">B0BYYYFM54</span></div>
<div class="t " style="left:809px;top:629px;line-height:40px;font-size:17.8px;font-weight:normal;color:#111;font-family:'Liberation Sans', sans-serif;font-style:normal;letter-spacing:0.689px;">Loading...</div>
<div class="abs" style="left:1053.5px;top:632px;width:0;height:0;border-left:6.500px solid transparent;border-top:6.500px solid #d0342c"></div>
<div class="t " style="left:62.7px;top:664px;line-height:40px;font-size:17.8px;font-weight:normal;color:#111;font-family:'Liberation Sans', sans-serif;font-style:normal;letter-spacing:0.545px;">B0B29C364N</div>
<div class="t " style="left:246.3px;top:664px;line-height:40px;font-size:17.8px;font-weight:normal;color:#1155cc;font-family:'Liberation Sans', sans-serif;font-style:normal;text-decoration:underline;text-decoration-thickness:1.100px;text-underline-offset:1.800px;text-decoration-skip-ink:none;"><span style="letter-spacing:1.346px">https://www.amazon.com/dp/</span><span style="letter-spacing:0.575px">B0B29C364N</span></div>
<div class="t " style="left:809px;top:664px;line-height:40px;font-size:17.8px;font-weight:normal;color:#111;font-family:'Liberation Sans', sans-serif;font-style:normal;letter-spacing:0.689px;">Loading...</div>
<div class="abs" style="left:1053.5px;top:667px;width:0;height:0;border-left:6.500px solid transparent;border-top:6.500px solid #d0342c"></div>
<div class="t " style="left:62.7px;top:699px;line-height:40px;font-size:17.8px;font-weight:normal;color:#111;font-family:'Liberation Sans', sans-serif;font-style:normal;letter-spacing:0.297px;">B0BRT67MWZ</div>
<div class="t " style="left:246.3px;top:699px;line-height:40px;font-size:17.8px;font-weight:normal;color:#1155cc;font-family:'Liberation Sans', sans-serif;font-style:normal;text-decoration:underline;text-decoration-thickness:1.100px;text-underline-offset:1.800px;text-decoration-skip-ink:none;"><span style="letter-spacing:1.346px">https://www.amazon.com/dp/</span><span style="letter-spacing:0.327px">B0BRT67MWZ</span></div>
<div class="t " style="left:809px;top:699px;line-height:40px;font-size:17.8px;font-weight:normal;color:#111;font-family:'Liberation Sans', sans-serif;font-style:normal;letter-spacing:0.689px;">Loading...</div>
<div class="abs" style="left:1053.5px;top:702px;width:0;height:0;border-left:6.500px solid transparent;border-top:6.500px solid #d0342c"></div>
<div class="t " style="left:62.7px;top:734px;line-height:40px;font-size:17.8px;font-weight:normal;color:#111;font-family:'Liberation Sans', sans-serif;font-style:normal;letter-spacing:0.35px;">B09YBS4TVK</div>
<div class="t " style="left:246.3px;top:734px;line-height:40px;font-size:17.8px;font-weight:normal;color:#1155cc;font-family:'Liberation Sans', sans-serif;font-style:normal;text-decoration:underline;text-decoration-thickness:1.100px;text-underline-offset:1.800px;text-decoration-skip-ink:none;"><span style="letter-spacing:1.346px">https://www.amazon.com/dp/</span><span style="letter-spacing:0.38px">B09YBS4TVK</span></div>
<div class="t " style="left:645.6px;top:734px;line-height:40px;font-size:17.8px;font-weight:normal;color:#111;font-family:'Liberation Sans', sans-serif;font-style:normal;letter-spacing:0.571px;">Ironhill Tech (SN Recorded)</div>
<div class="t " style="left:969px;top:734px;line-height:40px;font-size:17.8px;font-weight:normal;color:#111;font-family:'Liberation Sans', sans-serif;font-style:normal;width:400px;text-align:center;">875</div>
<div class="t " style="left:62.7px;top:769px;line-height:40px;font-size:17.8px;font-weight:normal;color:#111;font-family:'Liberation Sans', sans-serif;font-style:normal;letter-spacing:0.453px;">B0CB5NN3K5</div>
<div class="t " style="left:246.3px;top:769px;line-height:40px;font-size:17.8px;font-weight:normal;color:#1155cc;font-family:'Liberation Sans', sans-serif;font-style:normal;text-decoration:underline;text-decoration-thickness:1.100px;text-underline-offset:1.800px;text-decoration-skip-ink:none;"><span style="letter-spacing:1.346px">https://www.amazon.com/dp/</span><span style="letter-spacing:0.483px">B0CB5NN3K5</span></div>
<div class="t " style="left:809px;top:769px;line-height:40px;font-size:17.8px;font-weight:normal;color:#111;font-family:'Liberation Sans', sans-serif;font-style:normal;letter-spacing:0.689px;">Loading...</div>
<div class="abs" style="left:1053.5px;top:772px;width:0;height:0;border-left:6.500px solid transparent;border-top:6.500px solid #d0342c"></div>
<div class="t " style="left:62.7px;top:801px;line-height:40px;font-size:17.8px;font-weight:normal;color:#111;font-family:'Liberation Sans', sans-serif;font-style:normal;letter-spacing:0.153px;">B09MTLFVYL</div>
<div class="t " style="left:246.3px;top:801px;line-height:40px;font-size:17.8px;font-weight:normal;color:#1155cc;font-family:'Liberation Sans', sans-serif;font-style:normal;text-decoration:underline;text-decoration-thickness:1.100px;text-underline-offset:1.800px;text-decoration-skip-ink:none;"><span style="letter-spacing:1.346px">https://www.amazon.com/dp/</span><span style="letter-spacing:0.183px">B09MTLFVYL</span></div>
<div class="t " style="left:809px;top:801px;line-height:40px;font-size:17.8px;font-weight:normal;color:#111;font-family:'Liberation Sans', sans-serif;font-style:normal;letter-spacing:0.689px;">Loading...</div>
<div class="abs" style="left:1053.5px;top:807px;width:0;height:0;border-left:6.500px solid transparent;border-top:6.500px solid #d0342c"></div>
</div>
<div id="hs"></div>
<div class="abs" style="left:60px;top:823px;width:773px;height:12.500px;border-radius:7px;background:#dadce0"></div>
<div class="abs" style="left:0;top:821px;width:58px;height:17px;background:#f8f9fa"></div>
<div class="abs" style="left:57px;top:821px;width:1px;height:15px;background:#dddfe2"></div>
<div class="abs" style="left:0;top:836px;width:1278px;height:2px;background:#eceff1"></div>
</body></html>
